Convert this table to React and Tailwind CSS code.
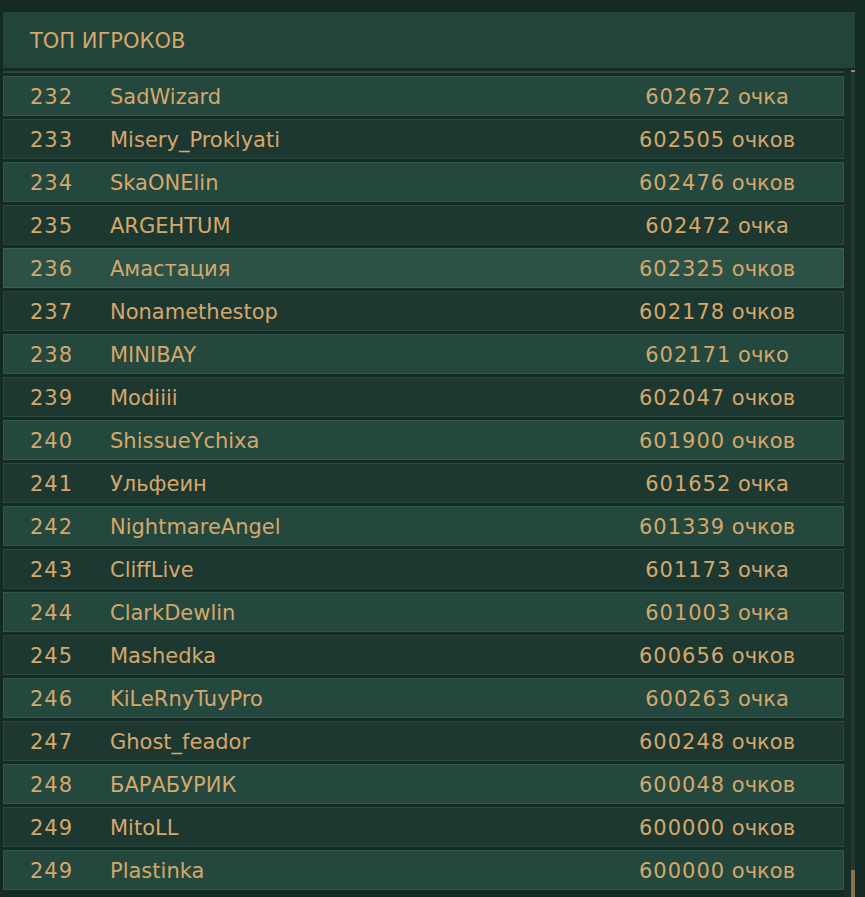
import React from 'react';

const PLAYERS = [
  { rank: 232, name: 'SadWizard', score: 602672, unit: 'очка' },
  { rank: 233, name: 'Misery_Proklyati', score: 602505, unit: 'очков' },
  { rank: 234, name: 'SkaONElin', score: 602476, unit: 'очков' },
  { rank: 235, name: 'ARGEHTUM', score: 602472, unit: 'очка' },
  { rank: 236, name: 'Амастация', score: 602325, unit: 'очков', active: true },
  { rank: 237, name: 'Nonamethestop', score: 602178, unit: 'очков' },
  { rank: 238, name: 'MINIBAY', score: 602171, unit: 'очко' },
  { rank: 239, name: 'Modiiii', score: 602047, unit: 'очков' },
  { rank: 240, name: 'ShissueYchixa', score: 601900, unit: 'очков' },
  { rank: 241, name: 'Ульфеин', score: 601652, unit: 'очка' },
  { rank: 242, name: 'NightmareAngel', score: 601339, unit: 'очков' },
  { rank: 243, name: 'CliffLive', score: 601173, unit: 'очка' },
  { rank: 244, name: 'ClarkDewlin', score: 601003, unit: 'очка' },
  { rank: 245, name: 'Mashedka', score: 600656, unit: 'очков' },
  { rank: 246, name: 'KiLeRnyTuyPro', score: 600263, unit: 'очка' },
  { rank: 247, name: 'Ghost_feador', score: 600248, unit: 'очков' },
  { rank: 248, name: 'БАРАБУРИК', score: 600048, unit: 'очков' },
  { rank: 249, name: 'MitoLL', score: 600000, unit: 'очков' },
  { rank: 249, name: 'Plastinka', score: 600000, unit: 'очков' },
];

function PlayerRow({ player, index }) {
  const tone = player.active
    ? 'bg-[#2c5248] border-[#386055]'
    : index % 2 === 0
      ? 'bg-[#24483e] border-[#30574b]'
      : 'bg-[#1d3831] border-[#2b483f]';

  return (
    <div className={`flex items-center h-[40px] border pt-[2px] pl-[26px] pr-[26px] ${tone}`}>
      <span className="w-[80px] tracking-[1px]">{player.rank}</span>
      <span className="flex-1">{player.name}</span>
      <span className="w-[200px] text-center">
        <span className="tracking-[1px]">{player.score}</span> {player.unit}
      </span>
    </div>
  );
}

export default function App() {
  return (
    <div
      className="h-[897px] w-[865px] overflow-hidden bg-[#142a24] pt-[12px] pl-[3px] text-[21px] leading-none text-[#d6a76b]"
      style={{ fontFamily: '"DejaVu Sans", sans-serif' }}
    >
      <div className="flex items-center h-[56px] w-[852px] bg-[#22443b] pt-[2px] pl-[27px]">
        ТОП ИГРОКОВ
      </div>

      <div className="flex mt-[2px]">
        <div className="w-[841px] mt-[1px]">
          <div className="h-[2px] bg-[#29483f]" />
          <div className="flex flex-col gap-[3px] mt-[3px]">
            {PLAYERS.map((player, i) => (
              <PlayerRow key={`${player.rank}-${player.name}`} player={player} index={i} />
            ))}
          </div>
        </div>

        <div className="w-[7px] h-[827px] bg-[#172f28]" />
        <div className="flex flex-col w-[4px] h-[827px] bg-[#26392e]">
          <div className="h-[2px] bg-[#a5875a]" />
          <div className="flex-1" />
          <div className="h-[27px] bg-[#8b7349]" />
        </div>
      </div>
    </div>
  );
}
